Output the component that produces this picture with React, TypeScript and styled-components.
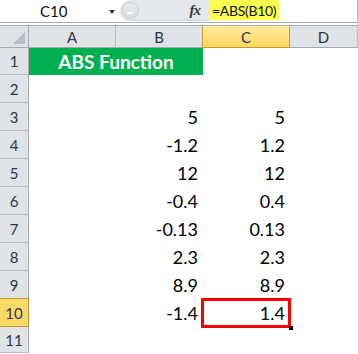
import React from "react";
import styled, { createGlobalStyle } from "styled-components";

const GlobalStyle = createGlobalStyle`
  html, body { margin: 0; padding: 0; background: #ffffff; overflow: hidden; }
  * { box-sizing: border-box; }
`;

const Page = styled.div`
  width: 358px;
  height: 354px;
  display: flex;
  flex-direction: column;
  background: #ffffff;
  font-family: "Lato", "Liberation Sans", sans-serif;
`;

const FormulaBar = styled.div`
  height: 23px;
  display: flex;
  border-bottom: 1px solid #a9adb3;
`;

const NameBox = styled.div`
  width: 120px;
  height: 22px;
  position: relative;
  display: flex;
  align-items: center;
  padding-left: 40px;
  font-size: 15px;
  color: #111;
`;

const Caret = styled.span`
  position: absolute;
  right: 5px;
  top: 10px;
  width: 0;
  height: 0;
  border-left: 3.5px solid transparent;
  border-right: 3.5px solid transparent;
  border-top: 4px solid #333;
`;

const FxArea = styled.div`
  width: 89px;
  height: 21px;
  background: #e4e7eb;
  border-bottom: 1px solid #cfd3d8;
  border-radius: 11px 0 0 11px;
  display: flex;
  align-items: center;
  justify-content: space-between;
  padding: 0 9px 0 2px;
`;

const Knob = styled.div`
  width: 17px;
  height: 17px;
  border-radius: 50%;
  background: linear-gradient(#e9ebee, #dadde1);
  border: 1px solid #c9ccd1;
  position: relative;
  &::after {
    content: "";
    position: absolute;
    left: 4px;
    top: 9px;
    width: 6px;
    height: 2px;
    background: #ffffff;
    border-radius: 1px;
  }
`;

const Fx = styled.span`
  font-family: "Liberation Serif", serif;
  font-style: italic;
  font-weight: bold;
  font-size: 15px;
  color: #3a3a3a;
  letter-spacing: -1px;
`;

const FormulaInput = styled.div`
  flex: 1;
  height: 22px;
  border-right: 1px solid #b8bcc2;
  display: flex;
  align-items: flex-start;
`;

const Highlight = styled.span`
  background: #fcff4d;
  height: 20px;
  padding: 0 3px 0 3px;
  display: flex;
  align-items: center;
  font-size: 14px;
  letter-spacing: -0.3px;
  color: #111;
`;

const Gap = styled.div`
  height: 3px;
  border-bottom: 1px solid #a9adb3;
`;

const Sheet = styled.div`
  display: grid;
  grid-template-columns: 29px 87px 87px 87px 1fr;
  grid-template-rows: 22px 27px repeat(9, 28px) 26px;
`;

const Corner = styled.div`
  background: #dfe3e8;
  border-right: 1px solid #a3a8ae;
  border-bottom: 1px solid #a3a8ae;
  position: relative;
  &::after {
    content: "";
    position: absolute;
    right: 3px;
    bottom: 3px;
    width: 0;
    height: 0;
    border-left: 12px solid transparent;
    border-bottom: 12px solid #b9bdc3;
  }
`;

const ColHead = styled.div<{ $active?: boolean }>`
  background: ${(p) =>
    p.$active ? "linear-gradient(#ffeaa0, #ffd75f)" : "#dfe3e8"};
  border-right: 1px solid ${(p) => (p.$active ? "#c9962f" : "#b6bbc1")};
  border-bottom: 1px solid ${(p) => (p.$active ? "#c9962f" : "#a3a8ae")};
  ${(p) => (p.$active ? "border-left: 1px solid #c9962f; margin-left: -1px;" : "")}
  display: flex;
  align-items: center;
  justify-content: center;
  font-size: 15px;
  color: #2b3546;
`;

const RowHead = styled.div<{ $active?: boolean }>`
  background: ${(p) => (p.$active ? "#ffd966" : "#dfe3e8")};
  border-right: 1px solid ${(p) => (p.$active ? "#c9962f" : "#a3a8ae")};
  border-bottom: 1px solid ${(p) => (p.$active ? "#c9962f" : "#b6bbc1")};
  ${(p) => (p.$active ? "border-top: 1px solid #c9962f; margin-top: -1px;" : "")}
  display: flex;
  align-items: center;
  justify-content: center;
  font-size: 15px;
  color: #2b3546;
`;

const Title = styled.div`
  grid-column: 2 / span 2;
  background: #00b050;
  display: flex;
  align-items: center;
  justify-content: center;
  color: #ffffff;
  font-weight: bold;
  font-size: 19px;
`;

const Cell = styled.div<{ $selected?: boolean }>`
  position: relative;
  display: flex;
  align-items: flex-end;
  justify-content: flex-end;
  padding: 0 5px 4px 0;
  font-size: 18px;
  line-height: 20px;
  color: #000;
  ${(p) =>
    p.$selected
      ? `
    outline: 3px solid #ff0000;
    outline-offset: -2px;
    margin-left: -1px;
  `
      : ""}
`;

const Handle = styled.span`
  position: absolute;
  right: -3px;
  bottom: -3px;
  width: 4px;
  height: 4px;
  background: #000;
`;

const rows: [string, string][] = [
  ["", ""],
  ["5", "5"],
  ["-1.2", "1.2"],
  ["12", "12"],
  ["-0.4", "0.4"],
  ["-0.13", "0.13"],
  ["2.3", "2.3"],
  ["8.9", "8.9"],
  ["-1.4", "1.4"],
];

export default function App() {
  return (
    <Page>
      <GlobalStyle />
      <FormulaBar>
        <NameBox>
          C10
          <Caret />
        </NameBox>
        <FxArea>
          <Knob />
          <Fx>fx</Fx>
        </FxArea>
        <FormulaInput>
          <Highlight>=ABS(B10)</Highlight>
        </FormulaInput>
      </FormulaBar>
      <Gap />
      <Sheet>
        <Corner />
        <ColHead>A</ColHead>
        <ColHead>B</ColHead>
        <ColHead $active>C</ColHead>
        <ColHead>D</ColHead>

        <RowHead>1</RowHead>
        <Title>ABS Function</Title>
        <Cell />
        <Cell />

        {rows.map(([b, c], i) => {
          const n = i + 2;
          const sel = n === 10;
          return (
            <React.Fragment key={n}>
              <RowHead $active={sel}>{n}</RowHead>
              <Cell />
              <Cell>{b}</Cell>
              <Cell $selected={sel}>
                {c}
                {sel && <Handle />}
              </Cell>
              <Cell />
            </React.Fragment>
          );
        })}
        <RowHead>11</RowHead>
        <Cell />
        <Cell />
        <Cell />
        <Cell />
      </Sheet>
    </Page>
  );
}
